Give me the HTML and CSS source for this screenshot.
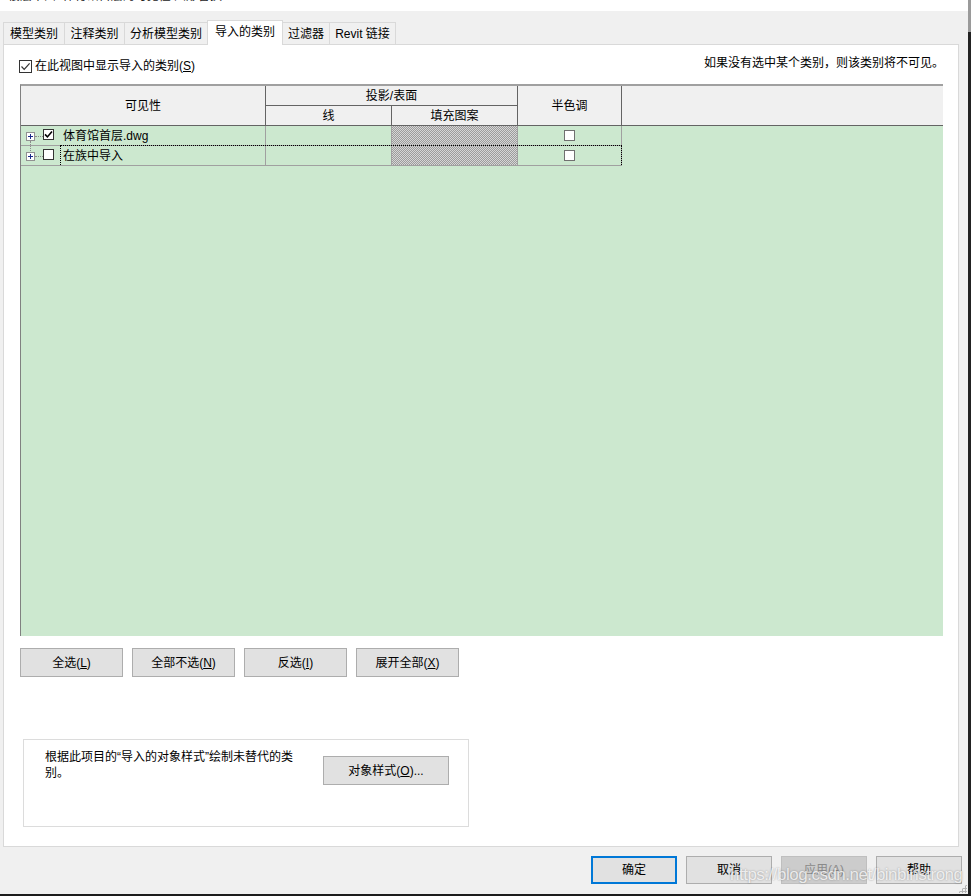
FILE: index.html
```html
<!DOCTYPE html>
<html lang="zh-CN">
<head>
<meta charset="utf-8">
<title>可见性/图形替换</title>
<link rel="stylesheet" href="styles.css">
</head>
<body>
<div class="screen">
  <div class="main">
    <div class="window">
      <div class="titlebar"><span class="title-text">楼层平面: 体育馆首层的可见性/图形替换</span></div>
      <div class="tabs">
        <div class="tab t1">模型类别</div>
        <div class="tab t2">注释类别</div>
        <div class="tab t3">分析模型类别</div>
        <div class="tab t4 active">导入的类别</div>
        <div class="tab t5">过滤器</div>
        <div class="tab t6">Revit 链接</div>
      </div>
      <div class="panel">
        <div class="toprow">
          <div class="showcb">
            <span class="cb13"><svg width="11" height="11" viewBox="0 0 11 11"><path d="M1.5 5.5 L4.2 8.3 L9.6 2.4" fill="none" stroke="#333" stroke-width="1.2"/></svg></span>
            <span>在此视图中显示导入的类别(<u>S</u>)</span>
          </div>
          <span class="hint">如果没有选中某个类别，则该类别将不可见。</span>
        </div>
        <div class="grid">
          <div class="ghead">
            <div class="h h-vis">可见性</div>
            <div class="h h-proj">投影/表面</div>
            <div class="h h-line">线</div>
            <div class="h h-fill">填充图案</div>
            <div class="h h-half">半色调</div>
            <div class="h h-rest"></div>
          </div>
          <div class="grow">
            <div class="cell c-name">
              <span class="exp first"><svg width="7" height="7" viewBox="0 0 7 7"><path d="M1 3.5 H6 M3.5 1 V6" stroke="#1c2a8a" stroke-width="1"/></svg></span>
              <span class="tree-h"></span>
              <span class="cb11"><svg width="9" height="9" viewBox="0 0 9 9"><path d="M1 4.4 L3.4 6.9 L8 1.4" fill="none" stroke="#000" stroke-width="1.6"/></svg></span>
              <span class="name">体育馆首层.dwg</span>
            </div>
            <div class="cell c-line"></div>
            <div class="cell c-fill"></div>
            <div class="cell c-half"><span class="cb11 grey"></span></div>
          </div>
          <div class="grow focus">
            <div class="cell c-name">
              <span class="exp"><svg width="7" height="7" viewBox="0 0 7 7"><path d="M1 3.5 H6 M3.5 1 V6" stroke="#1c2a8a" stroke-width="1"/></svg></span>
              <span class="tree-h"></span>
              <span class="cb11"></span>
              <span class="name">在族中导入</span>
            </div>
            <div class="cell c-line"></div>
            <div class="cell c-fill"></div>
            <div class="cell c-half"><span class="cb11 grey"></span></div>
          </div>
        </div>
        <div class="btnrow">
          <div class="btn">全选(<u>L</u>)</div>
          <div class="btn">全部不选(<u>N</u>)</div>
          <div class="btn">反选(<u>I</u>)</div>
          <div class="btn">展开全部(<u>X</u>)</div>
        </div>
        <div class="group">
          <div class="gtext">根据此项目的“导入的对象样式”绘制未替代的类别。</div>
          <div class="btn objbtn">对象样式(<u>O</u>)...</div>
        </div>
      </div>
      <div class="footer">
        <div class="fbtn primary">确定</div>
        <div class="fbtn">取消</div>
        <div class="fbtn disabled">应用(A)</div>
        <div class="fbtn">帮助</div>
      </div>
      <div class="grip"></div>
    </div>
    <div class="edge"></div>
  </div>
  <div class="watermark">https://blog.csdn.net/binbinstrong</div>
</div>
</body>
</html>
```
FILE: styles.css
```css
* { box-sizing: border-box; }
html, body { margin: 0; padding: 0; }
body {
  font-family: "Liberation Sans", "Noto Sans CJK SC", sans-serif;
  font-size: 12px;
  color: #000;
  background: #1c1c1c;
}
u { text-decoration: underline; text-underline-offset: 1px; }

.screen { position: relative; width: 971px; height: 896px; overflow: hidden; background: #1c1c1c; }
.main { display: flex; height: 894px; }
.window { position: relative; width: 968px; height: 894px; background: #f0f0f0; display: flex; flex-direction: column; }
.edge { width: 3px; background: linear-gradient(#9a9a9a 0 32px, #222 32px); }

.titlebar { height: 11px; background: #fff; overflow: hidden; padding-left: 8px; }
.title-text { display: block; line-height: 12px; margin-top: -10px; color: #222; white-space: nowrap; }

.tabs { display: flex; align-items: flex-end; height: 24px; margin-top: 9px; padding-left: 3px; }
.tab {
  height: 22px; border: 1px solid #d9d9d9; border-bottom: none; margin-left: -1px;
  display: flex; align-items: center; justify-content: center;
  background: #f0f0f0; line-height: 16px; white-space: nowrap;
}
.tab:first-child { margin-left: 0; }
.tab.active { height: 25px; margin-bottom: -1px; background: #fff; position: relative; z-index: 1; padding-bottom: 3px; }
.t1 { width: 62px; }
.t2 { width: 61px; }
.t3 { width: 84px; }
.t4 { width: 76px; }
.t5 { width: 48px; }
.t6 { width: 67px; }

.panel { margin-left: 3px; width: 956px; height: 803px; border: 1px solid #d9d9d9; background: #fff; }

.toprow { display: flex; justify-content: space-between; align-items: center; height: 16px; margin: 13px 14px 0 15px; }
.showcb { display: flex; align-items: center; gap: 3px; line-height: 16px; }
.cb13 { width: 13px; height: 13px; border: 1px solid #333; background: #fff; display: flex; align-items: center; justify-content: center; }
.hint { align-self: flex-start; margin-top: -3px; line-height: 16px; }

.grid {
  margin: 10px 0 0 16px; width: 923px; height: 552px;
  border-top: 2px solid #a0a0a0; border-left: 1px solid #808080;
  background: #cce8cf;
}
.ghead {
  display: grid; grid-template-columns: 245px 126px 126px 104px 1fr; grid-template-rows: 20px 19px;
  background: #f0f0f0; border-bottom: 1px solid #646464;
}
.h { display: flex; align-items: center; justify-content: center; line-height: 16px; }
.h-vis { grid-column: 1; grid-row: 1 / 3; border-right: 1px solid #646464; }
.h-proj { grid-column: 2 / 4; grid-row: 1; border-right: 1px solid #646464; border-bottom: 1px solid #646464; }
.h-line { grid-column: 2; grid-row: 2; border-right: 1px solid #646464; }
.h-fill { grid-column: 3; grid-row: 2; border-right: 1px solid #646464; }
.h-half { grid-column: 4; grid-row: 1 / 3; border-right: 1px solid #646464; }
.h-rest { grid-column: 5; grid-row: 1 / 3; }

.grow {
  position: relative; display: grid; grid-template-columns: 245px 126px 126px 104px;
  width: 601px; height: 20px; border-bottom: 1px solid #a0a0a0;
}
.cell { border-right: 1px solid #a0a0a0; display: flex; align-items: center; }
.c-name { padding-left: 5px; line-height: 16px; }
.exp { position: relative; width: 9px; height: 9px; border: 1px solid #919191; background: #fff; display: flex; margin-top: 2px; }
.exp.first::after {
  content: ""; position: absolute; left: 3px; top: 8px; height: 12px;
  border-left: 1px dotted #8a8a8a;
}
.tree-h { width: 8px; border-top: 1px dotted #8a8a8a; margin-top: 2px; }
.cb11 { width: 11px; height: 11px; border: 1px solid #333; background: #fff; display: flex; align-items: center; justify-content: center; margin-bottom: 3px; }
.cb11.grey { border-color: #707070; margin-bottom: 0; }
.name { margin-left: 9px; }
.c-fill { background: repeating-conic-gradient(#9c9c9c 0 25%, #d6d6d6 0 50%) 0 0 / 2px 2px; }
.c-half { justify-content: center; }
.grow.focus::after {
  content: ""; position: absolute; left: 39px; right: 0; top: -1px; bottom: 0;
  border: 1px dotted #000; border-bottom: none; pointer-events: none;
}

.btnrow { display: flex; gap: 9px; margin: 12px 0 0 16px; }
.btn {
  width: 103px; height: 29px; border: 1px solid #adadad; background: #e1e1e1;
  display: flex; align-items: center; justify-content: center; line-height: 16px; white-space: nowrap;
}

.group {
  margin: 62px 0 0 19px; width: 446px; height: 88px; border: 1px solid #dcdcdc;
  display: flex; align-items: flex-start; padding: 9px 0 0 21px;
}
.gtext { width: 254px; line-height: 16px; }
.objbtn { margin: 7px 0 0 24px; width: 126px; height: 29px; }

.footer { display: flex; justify-content: flex-end; gap: 9px; margin-top: 9px; padding-right: 6px; }
.fbtn {
  width: 86px; height: 28px; border: 1px solid #adadad; background: #e1e1e1;
  display: flex; align-items: center; justify-content: center; line-height: 16px;
}
.fbtn.primary { border: 2px solid #0078d7; }
.fbtn.disabled { background: #cccccc; border-color: #bfbfbf; color: #8a8a8a; }

.grip {
  position: absolute; right: 1px; bottom: 1px; width: 9px; height: 9px;
  background: radial-gradient(circle, #b4b4b4 0 1px, transparent 1.2px) 0 0 / 3px 3px;
  clip-path: polygon(100% 0, 100% 100%, 0 100%);
}

.watermark {
  position: absolute; left: 730px; top: 865px;
  font-family: "Liberation Sans", sans-serif; font-size: 17px; letter-spacing: -0.5px;
  color: rgba(255, 255, 255, 0.78); text-shadow: 0 0 2px rgba(0, 0, 0, 0.35);
  line-height: 20px; white-space: nowrap; pointer-events: none;
}
```
